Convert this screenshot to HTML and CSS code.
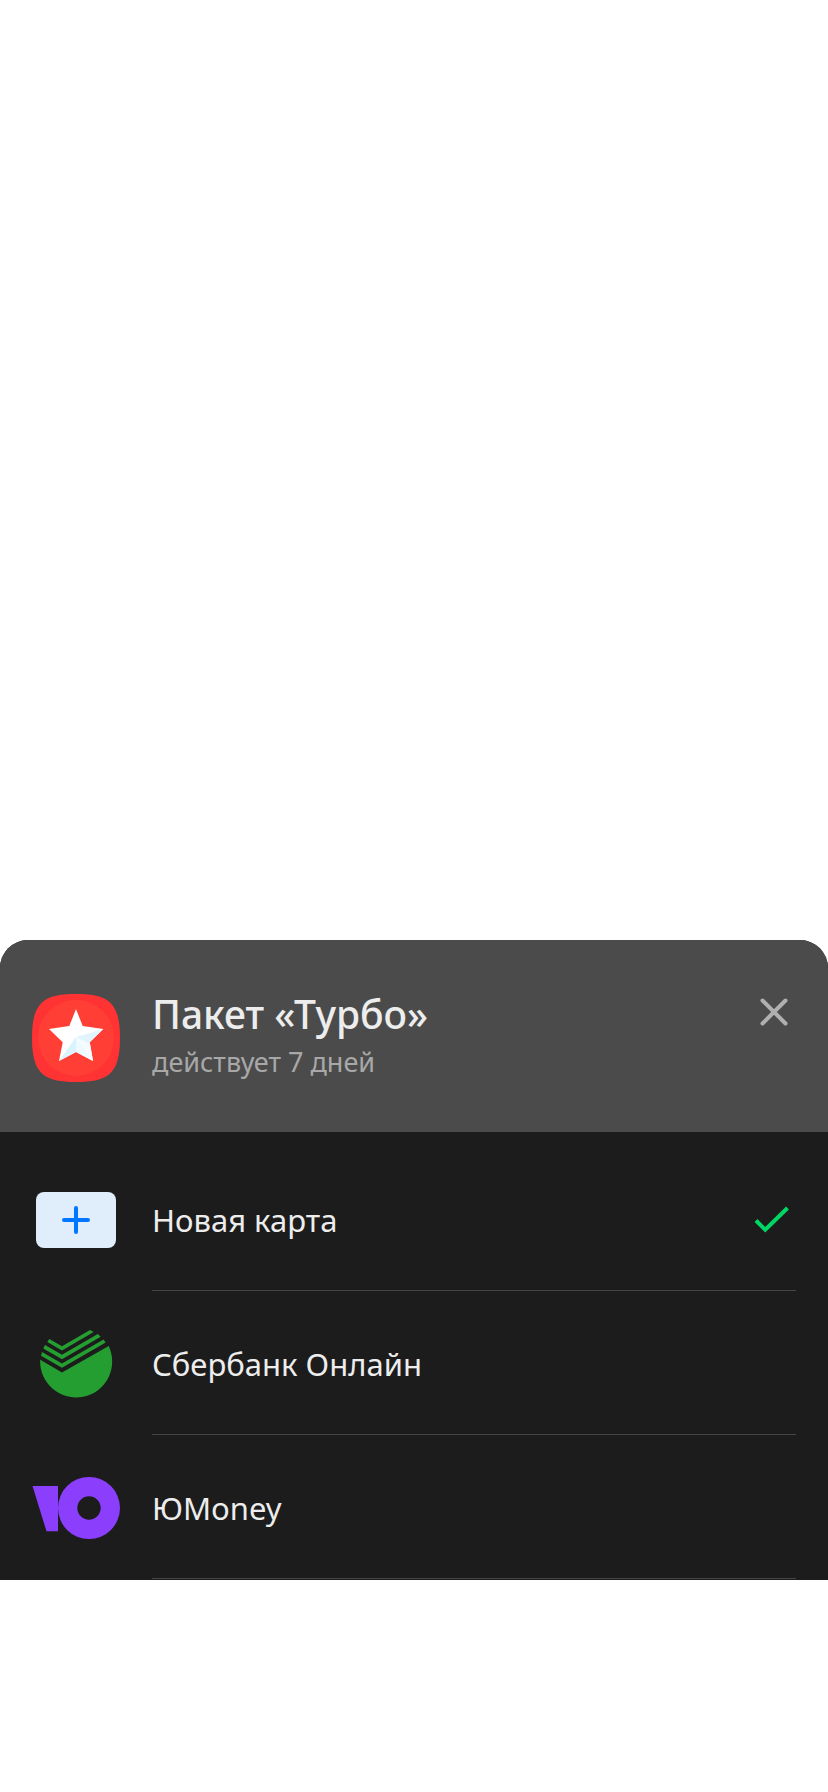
FILE: index.html
```
<!DOCTYPE html>
<html lang="ru">
<head>
<meta charset="utf-8">
<meta name="viewport" content="width=device-width, initial-scale=1">
<title>Пакет «Турбо»</title>
<link rel="stylesheet" href="styles.css">
</head>
<body>
<main class="sheet">
  <header class="header">
    <svg class="header-icon" viewBox="0 0 88 88" aria-hidden="true">
      <path fill="#ff3333" d="M44 0C76 0 88 8 88 44S76 88 44 88 0 80 0 44 12 0 44 0Z"/>
      <circle cx="44" cy="44" r="38" fill="#ff3f35"/>
      <path fill="#fff" d="M44 15L50.7 32 71.3 35 57.7 48.3 61 67 44 58 27 67 30.7 48.3 17 35 37.3 32Z"/>
      <path fill="#d9f3ff" d="M44 43V58L27 67Z"/>
      <path fill="#eefaff" d="M44 43V58L61 67Z"/>
      <path fill="#e0f5ff" d="M44 43L71.3 35 57.7 48.3 58 51Z"/>
      <path fill="#f4fcff" d="M44 43L58 50 61 67Z"/>
    </svg>
    <div class="header-text">
      <h1 class="title">Пакет «Турбо»</h1>
      <p class="subtitle">действует 7 дней</p>
    </div>
    <button class="close" type="button" aria-label="Закрыть">
      <svg class="close-icon" viewBox="0 0 28 28" aria-hidden="true"><path d="M2.5 2.5L25.5 25.5M25.5 2.5L2.5 25.5"/></svg>
    </button>
  </header>
  <div class="methods">
    <button class="method" type="button" aria-pressed="true">
      <svg class="logo logo-card" viewBox="0 0 80 56" aria-hidden="true">
        <rect width="80" height="56" rx="8" fill="#e0edfb"/>
        <path d="M40 16V40M28 28H52" stroke="#0077ff" stroke-width="4" stroke-linecap="round"/>
      </svg>
      <span class="label">Новая карта
        <svg class="check" viewBox="0 0 36 28" aria-hidden="true"><path d="M2 14.5L11.3 23.8 33.5 2"/></svg>
      </span>
    </button>
    <button class="method" type="button">
      <svg class="logo logo-sber" viewBox="0 0 72 68" aria-hidden="true">
        <g fill="#259e31">
          <path d="M9.3 9L22 16.2 50 0 53.7 2 22 20.4 7.3 11.9Z"/>
          <path d="M5 15L22 24.8 57.8 4.1 60.7 6.8 22 29.2 3.3 18.4Z"/>
          <path d="M2 22L22 33.5 63.5 9.6 65.7 12.6 22 37.8 1 25.7Z"/>
          <path d="M.2 29.8L22 42.4 68.7 16.1A36 36 0 1 1 .2 29.8Z"/>
        </g>
      </svg>
      <span class="label">Сбербанк Онлайн</span>
    </button>
    <button class="method" type="button">
      <svg class="logo logo-yoo" viewBox="0 0 88 62" aria-hidden="true">
        <g fill="#8b3ffd">
          <path d="M.5 9H26V54.3H14.5Z"/>
          <path fill-rule="evenodd" d="M57 0A31 31 0 1 1 57 62 31 31 0 1 1 57 0ZM57 19.3A11.7 11.7 0 1 0 57 42.7 11.7 11.7 0 1 0 57 19.3Z"/>
        </g>
      </svg>
      <span class="label">ЮMoney</span>
    </button>
  </div>
</main>
</body>
</html>
```
FILE: styles.css
```
* {
  box-sizing: border-box;
}

body {
  margin: 0;
  min-height: 100vh;
  padding-bottom: 212px;
  display: flex;
  flex-direction: column;
  justify-content: flex-end;
  background: #fff;
  font-family: "Noto Sans", "Open Sans", sans-serif;
}

.sheet {
  overflow: hidden;
  border-radius: 28px 28px 0 0;
  background: #1c1c1c;
  color: #ededed;
}

.header {
  display: flex;
  align-items: center;
  gap: 32px;
  min-height: 192px;
  padding: 16px 30px 12px 32px;
  background: #4b4b4b;
}

.header-icon {
  width: 88px;
  height: 88px;
  flex: none;
}

.header-text {
  flex: 1;
}

.title {
  margin: 0;
  font-size: 39px;
  font-weight: 500;
  line-height: 48px;
}

.subtitle {
  margin: 0;
  font-size: 27px;
  line-height: 48px;
  color: #a8a8a8;
}

.close {
  align-self: flex-start;
  margin-top: 32px;
  padding: 10px;
  border: 0;
  background: none;
}

.close-icon {
  display: block;
  width: 28px;
  height: 28px;
  fill: none;
  stroke: #b0b0b0;
  stroke-width: 4;
  stroke-linecap: round;
}

.methods {
  padding: 15px 32px 1px;
}

.method {
  display: flex;
  gap: 32px;
  width: 100%;
  height: 144px;
  padding: 2px 0 0;
  border: 0;
  background: none;
  color: inherit;
  font: inherit;
  font-size: 31px;
  line-height: 40px;
  text-align: left;
}

.logo {
  align-self: center;
  flex: none;
  width: 88px;
}

.logo-card {
  height: 56px;
}

.logo-sber {
  height: 68px;
}

.logo-yoo {
  height: 62px;
}

.label {
  display: flex;
  align-items: center;
  justify-content: space-between;
  flex: 1;
  align-self: stretch;
  padding-right: 6px;
  border-bottom: 1px solid #444;
}

.check {
  width: 36px;
  height: 28px;
  fill: none;
  stroke: #00d664;
  stroke-width: 4;
}
```
